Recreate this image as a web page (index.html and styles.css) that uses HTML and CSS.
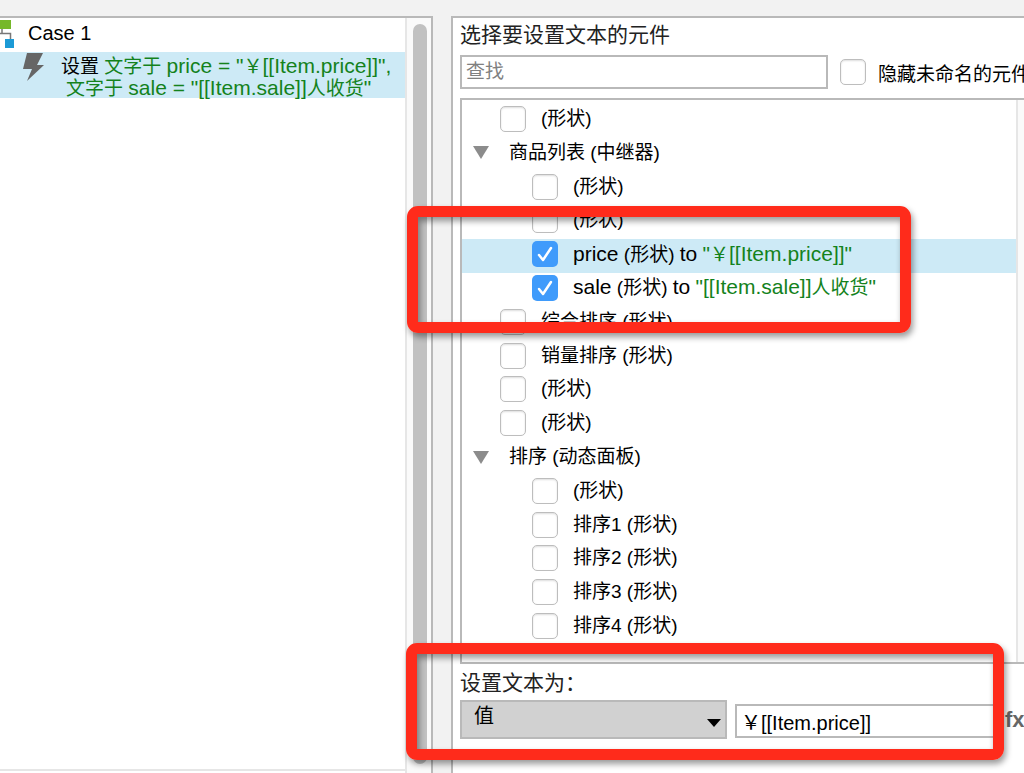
FILE: index.html
```
<!DOCTYPE html>
<html lang="zh-CN">
<head>
  <meta charset="UTF-8" />
  <meta name="viewport" content="width=device-width, initial-scale=1.0"/>
  <title>Case 1</title>
  <link rel="stylesheet" href="styles.css">
</head>
<body>

<div class="editor">
  <!-- Actions of the case -->
  <section class="panel cases">
    <div class="case-list">
      <div class="case">
        <svg class="case-icon" width="16" height="30" viewBox="0 0 16 30">
          <path d="M2 10v4M0 14.500h10.500v7" fill="none" stroke="#777" stroke-width="1.500"/>
          <rect x="0" y="1" width="11" height="9" fill="#76b82a"/>
          <rect x="5" y="20" width="9" height="9" fill="#1c9ad6"/>
        </svg>
        <span>Case 1</span>
      </div>
      <div class="action">
        <svg class="bolt" width="22" height="29" viewBox="0 0 22 29">
          <path d="M4 0H20L14 12H21L4 28L9 16H0Z" fill="#666"/>
        </svg>
        <p>设置 <span class="value">文字于 <b>price = "</b>￥<b>[[Item.price]]",</b></span><br><span class="value next">文字于 <b>sale = "[[Item.sale]]</b>人收货<b>"</b></span></p>
      </div>
    </div>
    <div class="scroll"><div class="thumb"></div></div>
  </section>

  <!-- Widget picker -->
  <section class="panel config">
    <h2>选择要设置文本的元件</h2>
    <div class="search-row">
      <input class="search" type="text" placeholder="查找" aria-label="查找">
      <label><input type="checkbox"> 隐藏未命名的元件</label>
    </div>

    <div class="tree-box">
      <div class="tree">
        <label class="row"><input type="checkbox"> (形状)</label>
        <div class="row group"><i class="arrow"></i>商品列表 (中继器)</div>
        <label class="row child"><input type="checkbox"> (形状)</label>
        <label class="row child"><input type="checkbox"> (形状)</label>
        <label class="row child selected"><input type="checkbox" checked> <span><b>price</b> (形状) <b>to</b> <span class="value"><b>"</b>￥<b>[[Item.price]]"</b></span></span></label>
        <label class="row child"><input type="checkbox" checked> <span><b>sale</b> (形状) <b>to</b> <span class="value"><b>"[[Item.sale]]</b>人收货<b>"</b></span></span></label>
        <label class="row"><input type="checkbox"> 综合排序 (形状)</label>
        <label class="row"><input type="checkbox"> 销量排序 (形状)</label>
        <label class="row"><input type="checkbox"> (形状)</label>
        <label class="row"><input type="checkbox"> (形状)</label>
        <div class="row group"><i class="arrow"></i>排序 (动态面板)</div>
        <label class="row child"><input type="checkbox"> (形状)</label>
        <label class="row child"><input type="checkbox"> 排序1 (形状)</label>
        <label class="row child"><input type="checkbox"> 排序2 (形状)</label>
        <label class="row child"><input type="checkbox"> 排序3 (形状)</label>
        <label class="row child"><input type="checkbox"> 排序4 (形状)</label>
      </div>
      <div class="tree-scroll"></div>
    </div>

    <div class="set-text">
      <label class="title" for="kind">设置文本为：</label>
      <div class="set-row">
        <select id="kind"><option>值</option></select>
        <input class="text" type="text" value="￥[[Item.price]]" aria-label="值">
        <button type="button">fx</button>
      </div>
    </div>
  </section>
</div>

<div class="mark mark-rows"></div>
<div class="mark mark-value"></div>

</body>
</html>
```
FILE: styles.css
```
:root {
  --line: #b9b9b9;
  --selected: #cdeaf6;
  --green: #14821c;
  --red: #ff2b1b;
}
* {
  box-sizing: border-box;
}
body {
  margin: 0;
  height: 100vh;
  overflow: hidden;
  position: relative;
  background: #f2f2f2;
  color: #000;
  font-family: "Liberation Sans", "Noto Sans CJK SC", sans-serif;
  font-size: 19px;
}
input, select, button {
  font-family: inherit;
  font-size: 20px;
}
b {
  font-size: 21px;
  font-weight: normal;
}
.editor {
  display: flex;
  gap: 18px;
  height: 100vh;
  padding-top: 16px;
}
.panel {
  background: #fff;
  border-top: 2px solid var(--line);
}
.value {
  color: var(--green);
}

/* left side */
.cases {
  flex: 0 0 433px;
  display: flex;
  border-right: 2px solid var(--line);
}
.case-list {
  flex: 1;
  margin-bottom: 2px;
  border-bottom: 2px solid #e6e6e6;
}
.case {
  display: flex;
  gap: 12px;
  height: 34px;
  font-size: 20px;
  line-height: 30px;
}
.case-icon {
  margin-top: 1px;
}
.action {
  display: flex;
  height: 46px;
  background: var(--selected);
  padding-left: 23px;
}
.bolt {
  flex: none;
  margin-top: 1px;
}
.action p {
  margin: 3px 0 0 16px;
  line-height: 21px;
  white-space: nowrap;
}
.next {
  margin-left: 5px;
}
.scroll {
  width: 26px;
  padding: 6px 5px 9px 6px;
  background: #fafafa;
  border-left: 2px solid #e6e6e6;
}
.thumb {
  height: 100%;
  width: 14px;
  border-radius: 7px;
  background: #c1c1c1;
}

/* right side */
.config {
  flex: 1;
  min-width: 0;
  display: flex;
  flex-direction: column;
  border-left: 2px solid var(--line);
  padding-left: 7px;
  overflow: hidden;
}
h2, .title {
  margin: 0;
  font-size: 21px;
  font-weight: normal;
  line-height: 34px;
  color: #222;
}
.search-row {
  display: flex;
  gap: 12px;
  margin: 3px 0 9px;
}
.search-row label {
  display: flex;
  align-items: center;
  gap: 12px;
  white-space: nowrap;
}
.search, .text {
  height: 34px;
  border: 2px solid var(--line);
  border-radius: 0;
  background: #fff;
  outline: none;
}
.search {
  flex: 0 0 368px;
  padding: 0 4px;
  font-size: 19px;
}
.search::placeholder {
  color: #808080;
}
input[type="checkbox"] {
  appearance: none;
  flex: none;
  width: 26px;
  height: 26px;
  margin: 0;
  border: 1px solid #bdbdbd;
  border-radius: 5px;
  background: #fff;
  box-shadow: inset 0 1px 2px #ddd;
}
input[type="checkbox"]:checked {
  border: none;
  box-shadow: none;
  background: #3f9bfb url("data:image/svg+xml,%3Csvg xmlns='http://www.w3.org/2000/svg' viewBox='0 0 26 26'%3E%3Cpath d='M7 14l4 5L19 7' fill='none' stroke='white' stroke-width='2.500' stroke-linecap='round' stroke-linejoin='round'/%3E%3C/svg%3E");
}
.tree-box {
  flex: 1;
  min-height: 0;
  display: flex;
  border: 2px solid var(--line);
  border-right: none;
}
.tree {
  flex: 1;
  display: grid;
  grid-auto-rows: 1fr;
  padding: 4px 0 17px;
}
.tree-scroll {
  width: 8px;
  border-left: 2px solid #e6e6e6;
  background: #fafafa;
}
.row {
  display: flex;
  align-items: center;
  gap: 15px;
  padding: 0 0 4px 38px;
  line-height: 28px;
  white-space: nowrap;
}
.child {
  padding-left: 70px;
}
.group {
  gap: 20px;
  padding-left: 11px;
}
.selected {
  background: var(--selected);
}
.arrow {
  border: 8px solid transparent;
  border-top: 13px solid #8c8c8c;
  border-bottom: none;
}
.set-text {
  flex: none;
  height: 109px;
  padding-top: 2px;
}
.title {
  display: block;
}
.set-row {
  display: flex;
  align-items: center;
}
select {
  appearance: none;
  flex: 0 0 267px;
  height: 39px;
  padding: 0 12px 8px;
  border: 2px solid var(--line);
  border-radius: 0;
  color: #000;
  background: #d1d1d1 url("data:image/svg+xml,%3Csvg xmlns='http://www.w3.org/2000/svg' width='14' height='8'%3E%3Cpath d='M0 0h14L7 8z'/%3E%3C/svg%3E") no-repeat right 4px bottom 10px;
}
.text {
  flex: 0 0 262px;
  width: 262px;
  min-width: 0;
  margin: 3px 0 0 8px;
  padding: 0 4px;
}
button {
  padding: 0;
  margin-left: 8px;
  border: none;
  background: none;
  color: #666;
  font-size: 22px;
  font-weight: bold;
}

/* red highlight frames over the dialog */
.mark {
  position: absolute;
  border: 11px solid var(--red);
  border-radius: 11px;
  box-shadow: 2px 4px 6px rgba(0,0,0,0.4), inset 2px 4px 6px rgba(0,0,0,0.4);
  pointer-events: none;
}
.mark-rows {
  left: 407px;
  top: 206px;
  width: 504px;
  height: 127px;
}
.mark-value {
  left: 406px;
  top: 643px;
  width: 598px;
  height: 117px;
}
```
